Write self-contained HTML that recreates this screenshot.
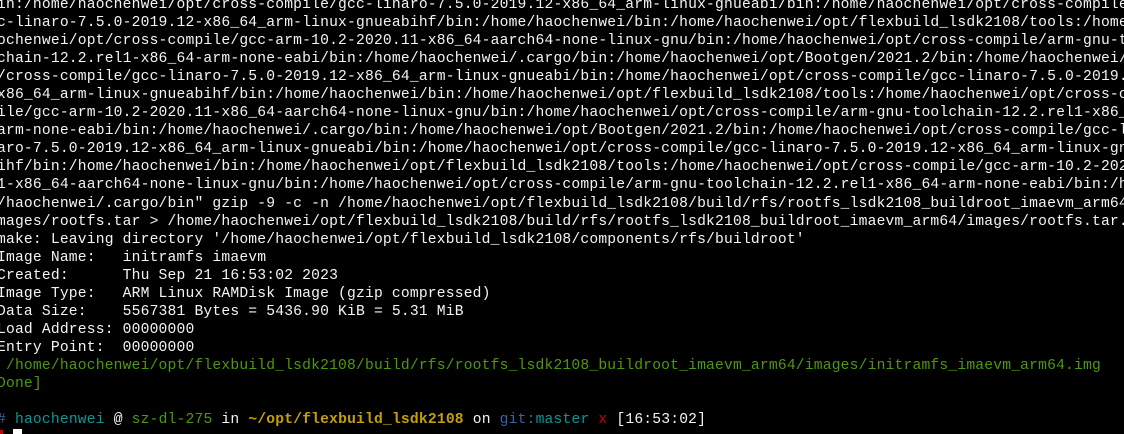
<!DOCTYPE html>
<html><head><meta charset="utf-8"><style>
html,body{margin:0;padding:0;background:#000;width:1124px;height:434px;overflow:hidden}
.t{position:absolute;left:-3px;top:-4px;font-family:"Liberation Mono","DejaVu Sans Mono",monospace;font-size:14.67px;letter-spacing:0.18px;line-height:18.05px;color:#f4f4f4;white-space:pre}
.g{color:#4e9a06}.b{color:#3465a4}.c{color:#06989a}.y{color:#c4a000;font-weight:bold}.r{color:#cc0000}
.cur{position:absolute;left:13px;top:429px;width:9px;height:5px;background:#fff}
.rd{position:absolute;left:0;top:430px;width:3px;height:4px;background:#cc0000}
</style></head><body>
<div class="t">in:/home/haochenwei/opt/cross-compile/gcc-linaro-7.5.0-2019.12-x86_64_arm-linux-gnueabi/bin:/home/haochenwei/opt/cross-compile/
c-linaro-7.5.0-2019.12-x86_64_arm-linux-gnueabihf/bin:/home/haochenwei/bin:/home/haochenwei/opt/flexbuild_lsdk2108/tools:/home
ochenwei/opt/cross-compile/gcc-arm-10.2-2020.11-x86_64-aarch64-none-linux-gnu/bin:/home/haochenwei/opt/cross-compile/arm-gnu-t
chain-12.2.rel1-x86_64-arm-none-eabi/bin:/home/haochenwei/.cargo/bin:/home/haochenwei/opt/Bootgen/2021.2/bin:/home/haochenwei/
/cross-compile/gcc-linaro-7.5.0-2019.12-x86_64_arm-linux-gnueabi/bin:/home/haochenwei/opt/cross-compile/gcc-linaro-7.5.0-2019.
x86_64_arm-linux-gnueabihf/bin:/home/haochenwei/bin:/home/haochenwei/opt/flexbuild_lsdk2108/tools:/home/haochenwei/opt/cross-c
ile/gcc-arm-10.2-2020.11-x86_64-aarch64-none-linux-gnu/bin:/home/haochenwei/opt/cross-compile/arm-gnu-toolchain-12.2.rel1-x86_
arm-none-eabi/bin:/home/haochenwei/.cargo/bin:/home/haochenwei/opt/Bootgen/2021.2/bin:/home/haochenwei/opt/cross-compile/gcc-l
aro-7.5.0-2019.12-x86_64_arm-linux-gnueabi/bin:/home/haochenwei/opt/cross-compile/gcc-linaro-7.5.0-2019.12-x86_64_arm-linux-gnu
ihf/bin:/home/haochenwei/bin:/home/haochenwei/opt/flexbuild_lsdk2108/tools:/home/haochenwei/opt/cross-compile/gcc-arm-10.2-202
1-x86_64-aarch64-none-linux-gnu/bin:/home/haochenwei/opt/cross-compile/arm-gnu-toolchain-12.2.rel1-x86_64-arm-none-eabi/bin:/h
/haochenwei/.cargo/bin" gzip -9 -c -n /home/haochenwei/opt/flexbuild_lsdk2108/build/rfs/rootfs_lsdk2108_buildroot_imaevm_arm64
mages/rootfs.tar &gt; /home/haochenwei/opt/flexbuild_lsdk2108/build/rfs/rootfs_lsdk2108_buildroot_imaevm_arm64/images/rootfs.tar.gz
make: Leaving directory '/home/haochenwei/opt/flexbuild_lsdk2108/components/rfs/buildroot'
Image Name:   initramfs imaevm
Created:      Thu Sep 21 16:53:02 2023
Image Type:   ARM Linux RAMDisk Image (gzip compressed)
Data Size:    5567381 Bytes = 5436.90 KiB = 5.31 MiB
Load Address: 00000000
Entry Point:  00000000
<span class="g"> /home/haochenwei/opt/flexbuild_lsdk2108/build/rfs/rootfs_lsdk2108_buildroot_imaevm_arm64/images/initramfs_imaevm_arm64.img</span>
<span class="g">Done]</span>

<span class="b">#</span> <span class="c">haochenwei</span> @ <span class="g">sz-dl-275</span> in <span class="y">~/opt/flexbuild_lsdk2108</span> on <span class="b">git:</span><span class="c">master</span> <span class="r">x</span> [16:53:02]</div>
<div class="rd"></div><div class="cur"></div>
</body></html>
